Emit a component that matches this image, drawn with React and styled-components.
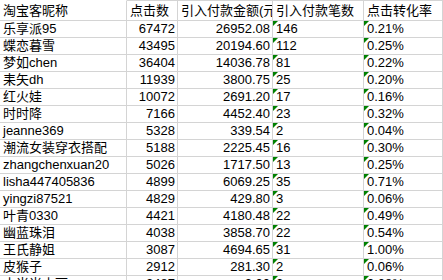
import React from "react";
import styled, { createGlobalStyle } from "styled-components";

const GlobalStyle = createGlobalStyle`
	html, body {
		margin: 0;
		padding: 0;
		background: #fff;
	}
`;

const Sheet = styled.div`
	display: grid;
	grid-template-columns: 127px 51px 95px 91px 79px;
	width: 443px;
	height: 280px;
	overflow: hidden;
	background: #fff;
	font-family: "Liberation Sans", "Noto Sans CJK SC", sans-serif;
	font-size: 13px;
	color: #000;
`;

const Cell = styled.div`
	position: relative;
	box-sizing: border-box;
	height: ${(p) => (p.$head ? "21px" : "17px")};
	line-height: ${(p) => (p.$head ? "19px" : "16px")};
	padding: ${(p) => (p.$right ? "0 2px 0 0" : "0 1px 0 3px")};
	text-align: ${(p) => (p.$right ? "right" : "left")};
	border-right: 1px solid #d4d4d4;
	border-bottom: 1px solid #d4d4d4;
	border-top: ${(p) =>
		p.$head ? (p.$first ? "1px solid transparent" : "1px solid #d4d4d4") : "none"};
	white-space: nowrap;
	overflow: hidden;

	${(p) =>
		p.$flag &&
		`
		&::before {
			content: "";
			position: absolute;
			left: 0;
			top: 0;
			border-top: 5px solid #008000;
			border-right: 5px solid transparent;
		}
	`}
`;

const headers = ["淘宝客昵称", "点击数", "引入付款金额(元)", "引入付款笔数", "点击转化率"];

const rows = [
	["乐享派95", "67472", "26952.08", "146", "0.21%"],
	["蝶恋暮雪", "43495", "20194.60", "112", "0.25%"],
	["梦如chen", "36404", "14036.78", "81", "0.22%"],
	["耒矢dh", "11939", "3800.75", "25", "0.20%"],
	["红火娃", "10072", "2691.20", "17", "0.16%"],
	["时时降", "7166", "4452.40", "23", "0.32%"],
	["jeanne369", "5328", "339.54", "2", "0.04%"],
	["潮流女装穿衣搭配", "5188", "2225.45", "16", "0.30%"],
	["zhangchenxuan20", "5026", "1717.50", "13", "0.25%"],
	["lisha447405836", "4899", "6069.25", "35", "0.71%"],
	["yingzi87521", "4829", "429.80", "3", "0.06%"],
	["叶青0330", "4421", "4180.48", "22", "0.49%"],
	["幽蓝珠泪", "4038", "3858.70", "22", "0.54%"],
	["王氏静姐", "3087", "4694.65", "31", "1.00%"],
	["皮猴子", "2912", "281.30", "2", "0.06%"],
	["小米米小丽", "2487", "3.00", "2", "0.08%"],
];

const App = () => {
	return (
		<>
			<GlobalStyle />
			<Sheet>
				{headers.map((h, i) => (
					<Cell key={h} $head $first={i === 0}>
						{h}
					</Cell>
				))}
				{rows.map((r, ri) => (
					<React.Fragment key={ri}>
						<Cell>{r[0]}</Cell>
						<Cell $right>{r[1]}</Cell>
						<Cell $right>{r[2]}</Cell>
						<Cell $flag>{r[3]}</Cell>
						<Cell $flag>{r[4]}</Cell>
					</React.Fragment>
				))}
			</Sheet>
		</>
	);
};

export default App;
